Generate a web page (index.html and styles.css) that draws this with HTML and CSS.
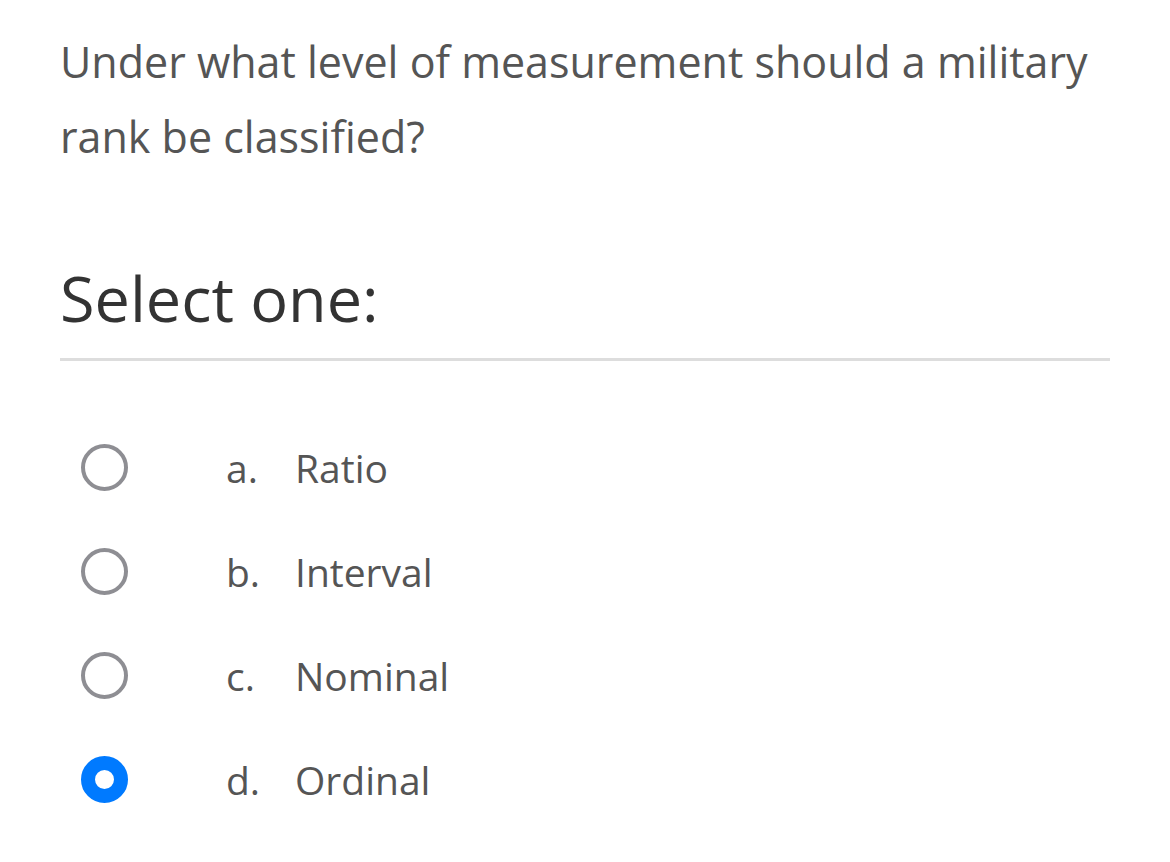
FILE: index.html
```html
<!DOCTYPE html>
<html>
<head>
<meta charset="utf-8">
<link rel="stylesheet" href="styles.css">
</head>
<body>
<div class="question">
  <p class="qtext">Under what level of measurement should a military rank be classified?</p>
  <div class="prompt">Select one:</div>
  <div class="answers">
    <div class="option"><span class="radio"></span><span class="letter">a.</span><span class="label">Ratio</span></div>
    <div class="option"><span class="radio"></span><span class="letter">b.</span><span class="label">Interval</span></div>
    <div class="option"><span class="radio"></span><span class="letter">c.</span><span class="label">Nominal</span></div>
    <div class="option"><span class="radio checked"></span><span class="letter">d.</span><span class="label">Ordinal</span></div>
  </div>
</div>
</body>
</html>
```

FILE: styles.css
```css
html, body {
  margin: 0;
  padding: 0;
  background: #ffffff;
}
body {
  font-family: "Open Sans", "Noto Sans", sans-serif;
}
.question {
  width: 1050px;
  padding: 24px 0 0 60px;
}
.qtext {
  margin: 0;
  font-size: 43px;
  line-height: 75px;
  color: #555555;
}
.prompt {
  margin-top: 84px;
  font-size: 63px;
  line-height: 80px;
  color: #333333;
  padding-bottom: 20px;
  border-bottom: 3px solid #dddddd;
}
.answers {
  padding-top: 54px;
}
.option {
  display: flex;
  align-items: center;
  height: 104px;
  font-size: 39px;
  color: #555555;
}
.radio {
  box-sizing: border-box;
  width: 47px;
  height: 47px;
  border-radius: 50%;
  border: 4px solid #8e8e93;
  margin-left: 21px;
  flex: none;
}
.radio.checked {
  border: 14px solid #007aff;
  background: #ffffff;
}
.letter {
  margin-left: 98px;
  width: 69px;
}
```
